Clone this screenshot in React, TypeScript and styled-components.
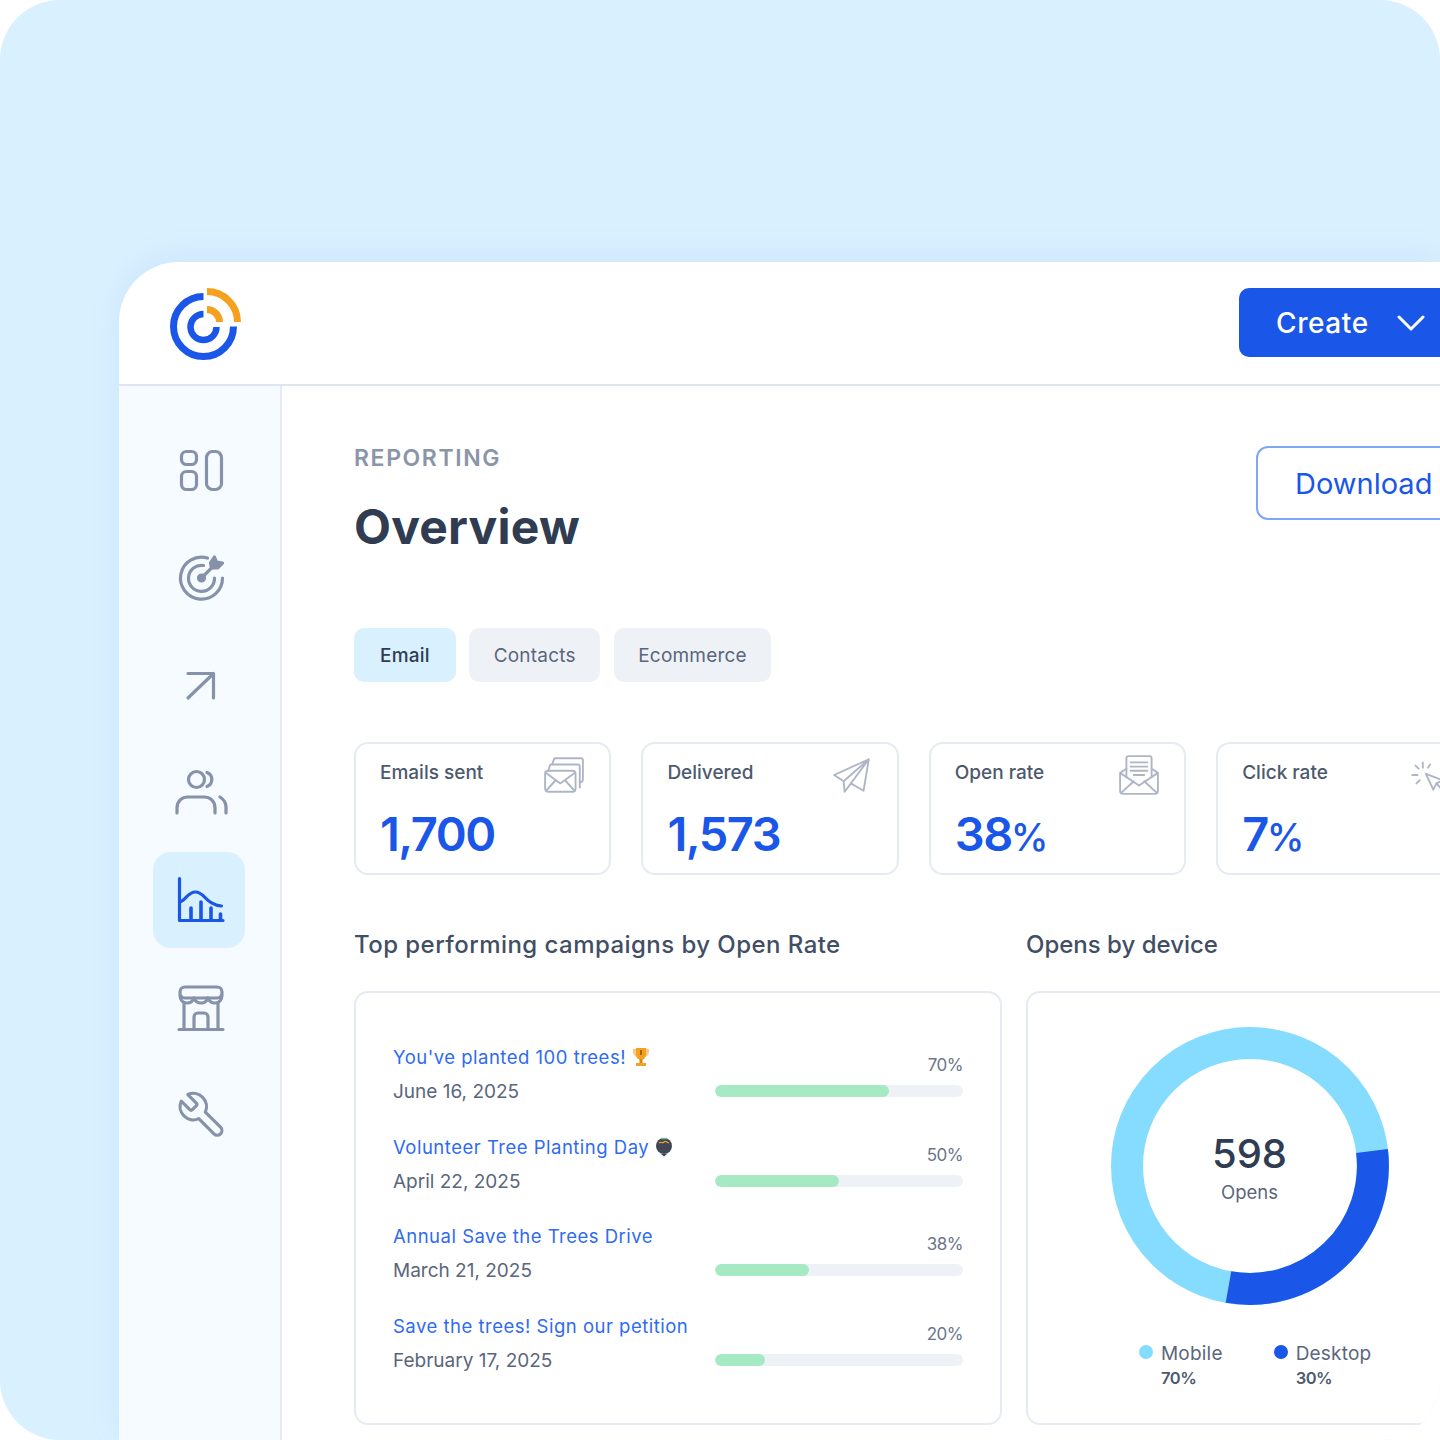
import React from "react";
import styled, { createGlobalStyle } from "styled-components";

const GlobalStyle = createGlobalStyle`
  html, body {
    margin: 0;
    padding: 0;
    background: #fff;
  }
  * {
    box-sizing: border-box;
  }
`;

const Canvas = styled.div`
  width: 1440px;
  height: 1440px;
  padding: 262px 0 0 119px;
  background: #d9f0ff;
  border-radius: 60px;
  overflow: hidden;
  font-family: "Inter", "Liberation Sans", sans-serif;
  color: #414e64;
`;

const Window = styled.div`
  width: 1321px;
  height: 1178px;
  background: #fff;
  border-top-left-radius: 60px;
  overflow: hidden;
  display: flex;
  flex-direction: column;
  box-shadow: 0 -6px 30px rgba(120, 170, 220, 0.12);
`;

const Header = styled.header`
  flex: none;
  height: 124px;
  padding: 26px 0 0 46px;
  border-bottom: 2px solid #dfe5f0;
  display: flex;
  align-items: flex-start;
  justify-content: space-between;

  .logo {
    margin-top: -3px;
  }
`;

const CreateButton = styled.div`
  width: 240px;
  height: 69px;
  margin-right: -39px;
  padding-left: 37px;
  background: #1a56e8;
  border-radius: 10px;
  color: #fff;
  font-size: 28px;
  font-weight: 500;
  letter-spacing: 0.6px;
  display: flex;
  align-items: center;
  gap: 28px;
`;

const Body = styled.div`
  flex: 1;
  display: flex;
  min-height: 0;
`;

const Sidebar = styled.nav`
  flex: none;
  width: 163px;
  padding: 36px 0 0 34px;
  background: #f6fbff;
  border-right: 2px solid #e6ebf3;
  display: flex;
  flex-direction: column;
  gap: 11.5px;
`;

const NavItem = styled.div<{ $active?: boolean }>`
  width: 92px;
  height: 96px;
  border-radius: 18px;
  background: ${({ $active }) => ($active ? "#d9f0ff" : "transparent")};
  color: ${({ $active }) => ($active ? "#1a56e8" : "#8592aa")};
  display: flex;
  align-items: center;
  justify-content: center;

  svg {
    overflow: visible;
  }
`;

const Main = styled.main`
  flex: 1;
  min-width: 0;
  padding: 60px 0 0 72px;
`;

const TitleRow = styled.div`
  height: 182px;
  display: flex;
  justify-content: space-between;
  align-items: flex-start;
`;

const Eyebrow = styled.div`
  font-size: 23px;
  line-height: 24px;
  font-weight: 600;
  letter-spacing: 1.6px;
  color: #8b95a8;
`;

const Title = styled.h1`
  margin: 29px 0 0;
  font-size: 48px;
  line-height: 56px;
  font-weight: 700;
  letter-spacing: 0.2px;
  color: #2f3c52;
`;

const DownloadButton = styled.div`
  width: 240px;
  height: 74px;
  margin: 0 -56px 0 0;
  padding-left: 37px;
  border: 2px solid #7fa7f5;
  border-radius: 12px;
  color: #1a56e8;
  font-size: 29px;
  display: flex;
  align-items: center;
`;

const Tabs = styled.div`
  display: flex;
  gap: 13.5px;
`;

const Tab = styled.div<{ $active?: boolean }>`
  height: 54px;
  padding: 0 ${({ $active }) => ($active ? "26px" : "24.5px")};
  border-radius: 10px;
  background: ${({ $active }) => ($active ? "#d9f0ff" : "#eef2f7")};
  color: ${({ $active }) => ($active ? "#2f3c52" : "#5a667c")};
  font-size: 19px;
  font-weight: ${({ $active }) => ($active ? 500 : 400)};
  letter-spacing: 0.2px;
  display: flex;
  align-items: center;
`;

const Stats = styled.div`
  margin-top: 60px;
  display: flex;
  gap: 30px;
`;

const StatCard = styled.div`
  flex: none;
  width: 257.4px;
  height: 133px;
  padding: 17px 24px 0 24px;
  border: 2px solid #e6ebf3;
  border-radius: 14px;
  position: relative;
`;

const StatLabel = styled.div`
  font-size: 19px;
  line-height: 24px;
  font-weight: 500;
  color: #4d596e;
`;

const StatValue = styled.div`
  margin-top: 21px;
  font-size: 47px;
  line-height: 56px;
  font-weight: 600;
  letter-spacing: -1.5px;
  color: #1a56e8;
`;

const Unit = styled.span`
  margin-left: -1px;
  font-size: 38px;
  font-weight: 500;
  letter-spacing: 0;
`;

const StatIcon = styled.svg`
  position: absolute;
  top: 10px;
  right: 24px;
  color: #aeb6c6;
  overflow: visible;
`;

const Columns = styled.div`
  margin-top: 55px;
  display: flex;
  gap: 24px;
`;

const LeftColumn = styled.section`
  flex: none;
  width: 648px;
`;

const RightColumn = styled.section`
  flex: none;
  width: 480px;
`;

const SectionTitle = styled.h2<{ $spaced?: boolean }>`
  margin: 0 0 31px;
  font-size: 24px;
  line-height: 30px;
  font-weight: 500;
  letter-spacing: ${({ $spaced }) => ($spaced ? "0.45px" : "0")};
  color: #414e64;
`;

const Panel = styled.div`
  height: 434px;
  border: 2px solid #e6ebf3;
  border-radius: 14px;
`;

const CampaignPanel = styled(Panel)`
  padding: 51px 37px 0 37px;
  display: flex;
  flex-direction: column;
  gap: 28.5px;
`;

const DevicePanel = styled(Panel)`
  padding: 32px 0 0 80.5px;
`;

const Campaign = styled.div`
  height: 61px;
  display: flex;
  justify-content: space-between;
  align-items: flex-start;
`;

const CampaignText = styled.div`
  display: flex;
  flex-direction: column;
  gap: 9px;
`;

const CampaignName = styled.div`
  font-size: 18.5px;
  line-height: 26px;
  letter-spacing: 0.5px;
  color: #2f6bf0;
  display: flex;
  align-items: center;
  gap: 5px;
`;

const CampaignDate = styled.div`
  font-size: 19px;
  line-height: 26px;
  color: #5a667c;
`;

const Progress = styled.div`
  width: 248px;
  padding-top: 10px;
`;

const Percent = styled.div`
  text-align: right;
  font-size: 17px;
  line-height: 22px;
  color: #6b768b;
  letter-spacing: -0.5px;
`;

const Track = styled.div`
  height: 12px;
  margin-top: 9px;
  border-radius: 6px;
  background: #eef2f7;
  overflow: hidden;
`;

const Fill = styled.div`
  height: 100%;
  border-radius: 6px;
  background: #a6eac4;
`;

const Donut = styled.div`
  width: 282px;
  height: 282px;
  position: relative;
`;

const DonutCenter = styled.div`
  position: absolute;
  inset: 0;
  padding-top: 103px;
  text-align: center;
`;

const DonutValue = styled.div`
  font-size: 40px;
  line-height: 52px;
  font-weight: 500;
  color: #2f3c52;
`;

const DonutLabel = styled.div`
  font-size: 18.5px;
  line-height: 24px;
  color: #5a667c;
`;

const Legend = styled.div`
  margin: 34px 0 0 30.5px;
  display: flex;
  gap: 51px;
`;

const LegendItem = styled.div`
  display: grid;
  grid-template-columns: 14px auto;
  column-gap: 8px;
  align-items: center;
`;

const Dot = styled.span<{ $color: string }>`
  width: 14px;
  height: 14px;
  margin-top: -4px;
  border-radius: 50%;
  background: ${({ $color }) => $color};
`;

const LegendName = styled.div`
  font-size: 19px;
  line-height: 26px;
  letter-spacing: 0.2px;
  color: #5a667c;
`;

const LegendValue = styled.div`
  grid-column: 2;
  font-size: 16.5px;
  line-height: 23px;
  font-weight: 600;
  letter-spacing: -0.5px;
  color: #4d596e;
`;

const Logo = () => (
  <svg className="logo" width="80" height="80" viewBox="0 0 80 80" fill="none" strokeWidth="7">
    <path d="M38.500 11.500A30 30 0 1 0 68.500 41.500" stroke="#1a56e8" />
    <path d="M38.500 29A13 13 0 1 0 51.500 42" stroke="#1a56e8" strokeWidth="6.500" />
    <path d="M42 6.500A30.500 30.500 0 0 1 72.500 37" stroke="#f5a01e" />
    <path d="M42 24.500A12.500 12.500 0 0 1 54.500 37" stroke="#f5a01e" />
  </svg>
);

const NavIcon = ({ children }: { children: React.ReactNode }) => (
  <svg
    width="48"
    height="48"
    viewBox="-1 0 48 48"
    fill="none"
    stroke="currentColor"
    strokeWidth="3.200"
    strokeLinecap="round"
    strokeLinejoin="round"
  >
    {children}
  </svg>
);

const navIcons = [
  <>
    <rect x="5.500" y="5.500" width="15" height="13" rx="5" />
    <rect x="5.500" y="25.500" width="15" height="18" rx="5" />
    <rect x="30.500" y="5.500" width="15" height="38" rx="6" />
  </>,
  <g transform="translate(2.500 0)">
    <path d="M29 4A21 21 0 1 0 44 24" />
    <path d="M25 11.500A13 13 0 1 0 36 24" />
    <circle cx="23" cy="24" r="3" fill="currentColor" />
    <path d="M23 24l10-10" />
    <path d="M32 9l4-6 2 5 6 1-5 5h-6z" fill="currentColor" />
  </g>,
  <path d="M12 12.500H37.500V37M12 37L37.500 12.500" />,
  <>
    <circle cx="20.500" cy="10.500" r="8" />
    <path d="M31 3.500a7.500 7.500 0 0 1 0 14" />
    <path d="M1 44v-5c0-7 5-11 11-11h16c6 0 11 4 11 11v5" />
    <path d="M44 28c3 2 6 6 6 10v6" />
  </>,
  <>
    <path d="M3.500 2.500V44.500H47" />
    <path d="M3.500 26c6-1 8-10 16-10 9 0 11 13 26 14" />
    <path d="M15 44V32M25 44V26M35 44V32M44.500 44V38" strokeWidth="3.600" />
  </>,
  <g transform="translate(1 0)">
    <rect x="3" y="3" width="42" height="11" rx="5" />
    <path d="M3 11c0 5 3 8 7 8s6-2 7-5c1 3 3 5 7 5s6-2 7-5c1 3 3 5 7 5s7-3 7-8" />
    <path d="M7 19v26M41 19v26M2 45.500h44" />
    <path d="M17 45V33a4 4 0 0 1 4-4h6a4 4 0 0 1 4 4v12" />
  </g>,
  <g transform="translate(52.500 -2) scale(-2.200 2.200)">
    <path
      strokeWidth="1.450"
      d="M14.700 6.300a1 1 0 0 0 0 1.400l1.600 1.600a1 1 0 0 0 1.400 0l3.770-3.770a6 6 0 0 1-7.940 7.940l-6.910 6.910a2.120 2.120 0 0 1-3-3l6.910-6.910a6 6 0 0 1 7.940-7.940l-3.760 3.760z"
    />
  </g>,
];

const statIcons = [
  <>
    <path d="M9 9l2-5h25a2 2 0 0 1 2 2v18a3 3 0 0 1-3 3" />
    <path d="M5 16l2-6h26a2 2 0 0 1 2 2v20" />
    <rect x="2" y="16" width="29" height="20" rx="3" />
    <path d="M3 18l13.500 10L30 18M3 35l9-10M30 35l-9-10" />
  </>,
  <>
    <path d="M36 5L3 20l9 6zM36 5L12 26l1 10zM36 5l-5 30-12-7M13 36l6-8" />
  </>,
  <>
    <path d="M2 18v17a3 3 0 0 0 3 3h30a3 3 0 0 0 3-3V18l-6-4M8 14l-6 4 18 12 18-12" />
    <path d="M8 22V4a2 2 0 0 1 2-2h20a2 2 0 0 1 2 2v18" />
    <path d="M3 37l12-11M37 37L25 26M12 8h16M12 12h16M12 16h16M15 20h10" />
  </>,
  <g transform="translate(5 0)">
    <path d="M14 19l16 6-6 3-3 6z" />
    <path d="M24 28l6 7" />
    <path d="M11 8v5M4 11l3 3M1 20h5M5 28l3-3M18 10l-2 3" />
  </g>,
];

const Trophy = () => (
  <svg width="20" height="20" viewBox="0 0 20 20">
    <path d="M2 2h16v3c0 3-3 5-5 5H7C5 10 2 8 2 5z" fill="#f8c98a" />
    <path d="M5 1h10v6c0 3-2 6-5 6S5 10 5 7z" fill="#f5a01e" />
    <path d="M8.500 12h3v4h-3z" fill="#d98a12" />
    <path d="M5 16h10v3H5z" fill="#f5a01e" />
    <path d="M10 3v5" stroke="#5b4208" strokeWidth="1.200" />
  </svg>
);

const Bomb = () => (
  <svg width="20" height="20" viewBox="0 0 20 20">
    <circle cx="10" cy="9" r="8" fill="#3f4656" />
    <path d="M5 6c2-2 3 1 5-1s3 1 5 1" stroke="#f5a01e" fill="none" strokeWidth="1.200" />
    <path d="M7 1.500h6" stroke="#6fc48f" strokeWidth="1.500" />
    <path d="M7 17h6l-3 2.500z" fill="#3f4656" />
  </svg>
);

const campaigns = [
  { name: "You've planted 100 trees!", date: "June 16, 2025", value: 70, icon: <Trophy /> },
  { name: "Volunteer Tree Planting Day", date: "April 22, 2025", value: 50, icon: <Bomb /> },
  { name: "Annual Save the Trees Drive", date: "March 21, 2025", value: 38 },
  { name: "Save the trees! Sign our petition", date: "February 17, 2025", value: 20 },
];

const stats = [
  { label: "Emails sent", value: "1,700" },
  { label: "Delivered", value: "1,573" },
  { label: "Open rate", value: "38", unit: "%" },
  { label: "Click rate", value: "7", unit: "%" },
];

const App = () => (
  <>
    <GlobalStyle />
    <Canvas>
      <Window>
        <Header>
          <Logo />
          <CreateButton>
            Create
            <svg width="28" height="16" viewBox="0 0 28 16" fill="none" stroke="#fff" strokeWidth="3" strokeLinecap="round" strokeLinejoin="round">
              <path d="M2 2l12 12L26 2" />
            </svg>
          </CreateButton>
        </Header>
        <Body>
          <Sidebar>
            {navIcons.map((icon, i) => (
              <NavItem key={i} $active={i === 4}>
                <NavIcon>{icon}</NavIcon>
              </NavItem>
            ))}
          </Sidebar>
          <Main>
            <TitleRow>
              <div>
                <Eyebrow>REPORTING</Eyebrow>
                <Title>Overview</Title>
              </div>
              <DownloadButton>Download</DownloadButton>
            </TitleRow>
            <Tabs>
              <Tab $active>Email</Tab>
              <Tab>Contacts</Tab>
              <Tab>Ecommerce</Tab>
            </Tabs>
            <Stats>
              {stats.map((stat, i) => (
                <StatCard key={stat.label}>
                  <StatLabel>{stat.label}</StatLabel>
                  <StatValue>
                    {stat.value}
                    {stat.unit && <Unit>{stat.unit}</Unit>}
                  </StatValue>
                  <StatIcon width="42" height="42" viewBox="0 0 40 40" fill="none" stroke="currentColor" strokeWidth="1.800" strokeLinejoin="round" strokeLinecap="round">
                    {statIcons[i]}
                  </StatIcon>
                </StatCard>
              ))}
            </Stats>
            <Columns>
              <LeftColumn>
                <SectionTitle $spaced>Top performing campaigns by Open Rate</SectionTitle>
                <CampaignPanel>
                  {campaigns.map((c) => (
                    <Campaign key={c.name}>
                      <CampaignText>
                        <CampaignName>
                          {c.name}
                          {c.icon}
                        </CampaignName>
                        <CampaignDate>{c.date}</CampaignDate>
                      </CampaignText>
                      <Progress>
                        <Percent>{c.value}%</Percent>
                        <Track>
                          <Fill style={{ width: `${c.value}%` }} />
                        </Track>
                      </Progress>
                    </Campaign>
                  ))}
                </CampaignPanel>
              </LeftColumn>
              <RightColumn>
                <SectionTitle>Opens by device</SectionTitle>
                <DevicePanel>
                  <Donut>
                    <svg width="282" height="282" viewBox="0 0 282 282" fill="none" strokeWidth="32">
                      <circle cx="141" cy="141" r="123" stroke="#85dcff" />
                      <path d="M263 126A123 123 0 0 1 119.500 262" stroke="#1a56e8" />
                    </svg>
                    <DonutCenter>
                      <DonutValue>598</DonutValue>
                      <DonutLabel>Opens</DonutLabel>
                    </DonutCenter>
                  </Donut>
                  <Legend>
                    <LegendItem>
                      <Dot $color="#85dcff" />
                      <LegendName>Mobile</LegendName>
                      <LegendValue>70%</LegendValue>
                    </LegendItem>
                    <LegendItem>
                      <Dot $color="#1a56e8" />
                      <LegendName>Desktop</LegendName>
                      <LegendValue>30%</LegendValue>
                    </LegendItem>
                  </Legend>
                </DevicePanel>
              </RightColumn>
            </Columns>
          </Main>
        </Body>
      </Window>
    </Canvas>
  </>
);

export default App;
